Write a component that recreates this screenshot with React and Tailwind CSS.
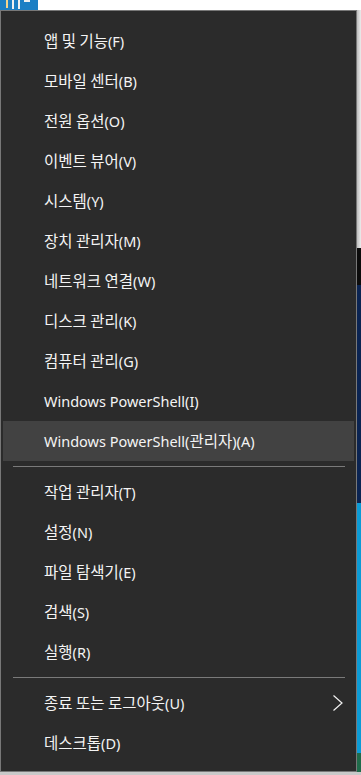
import React from 'react';

const FONT = { fontFamily: '"Noto Sans", "Noto Sans CJK KR", sans-serif' };

const groups = [
  [
    '앱 및 기능(F)',
    '모바일 센터(B)',
    '전원 옵션(O)',
    '이벤트 뷰어(V)',
    '시스템(Y)',
    '장치 관리자(M)',
    '네트워크 연결(W)',
    '디스크 관리(K)',
    '컴퓨터 관리(G)',
    'Windows PowerShell(I)',
    'Windows PowerShell(관리자)(A)',
  ],
  ['작업 관리자(T)', '설정(N)', '파일 탐색기(E)', '검색(S)', '실행(R)'],
  ['종료 또는 로그아웃(U)', '데스크톱(D)'],
];

// 한글 부분은 조금 더 크게 (맑은 고딕 폭에 맞추기)
const renderLabel = (label) =>
  label.split(/([\uAC00-\uD7A3][\uAC00-\uD7A3 ]*)/).map((part, i) =>
    /[\uAC00-\uD7A3]/.test(part) ? (
      <span key={i} className="text-[15.5px]" style={{ fontFamily: '"Noto Sans CJK KR", sans-serif' }}>
        {part}
      </span>
    ) : (
      <span key={i}>{part}</span>
    )
  );

const MenuItem = ({ label, active, submenu }) => (
  <div
    className={`mx-[2px] h-[40px] flex items-center justify-between pl-[41px] pr-[10px] text-[14.5px] text-[#f4f4f4] ${
      active ? 'bg-[#424242]' : ''
    }`}
  >
    <span className="leading-none whitespace-pre">{renderLabel(label)}</span>
    {submenu && (
      <svg width="12" height="18" viewBox="0 0 12 18" fill="none">
        <path d="M1.5 1.5 L10 9 L1.5 16.5" stroke="#f2f2f2" strokeWidth="1.2" />
      </svg>
    )}
  </div>
);

const Separator = () => (
  <div className="h-[11px] pt-[5px]">
    <div className="ml-[12px] mr-[11px] h-px bg-[#7a7a7a]" />
  </div>
);

const App = () => {
  return (
    <div className="w-[361px] h-[775px] overflow-hidden bg-white flex flex-col" style={FONT}>
      {/* 위쪽 작업 표시줄 조각 */}
      <div className="h-[10px] flex shrink-0">
        <div className="w-[38px] bg-[#1c7fc4] flex gap-[4px] pl-[6px]">
          <div className="w-[2px] h-[8px] bg-[#f5d48a]" />
          <div className="w-[8px] h-[9px] border-r-2 border-l-2 border-[#f0f0f0]" />
          <div className="w-[6px] h-[6px] border-t-2 border-[#f0f0f0]" />
        </div>
        <div className="flex-1 bg-white" />
      </div>

      <div className="flex flex-1 min-h-0">
        {/* 메뉴 */}
        <div className="w-[357px] h-[762px] shrink-0 border border-[#787878] bg-[#2b2b2b] pt-[10px]">
          {groups.map((items, gi) => (
            <React.Fragment key={gi}>
              {gi > 0 && <Separator />}
              {items.map((label) => (
                <MenuItem
                  key={label}
                  label={label}
                  active={label === 'Windows PowerShell(관리자)(A)'}
                  submenu={label === '종료 또는 로그아웃(U)'}
                />
              ))}
            </React.Fragment>
          ))}
        </div>

        {/* 오른쪽 배경 조각 */}
        <div className="flex-1 flex flex-col">
          <div className="h-[238px] bg-gradient-to-r from-[#bdbdbd] to-[#ececec]" />
          <div className="h-[37px] bg-[#0c0c0c]" />
          <div className="h-[218px] bg-[#0b2452]" />
          <div className="h-[250px] bg-[#0b9bd6]" />
          <div className="flex-1 bg-[#1f6b4a]" />
        </div>
      </div>

      <div className="h-[3px] shrink-0 bg-[#c9c9c9]" />
    </div>
  );
};

export default App;
